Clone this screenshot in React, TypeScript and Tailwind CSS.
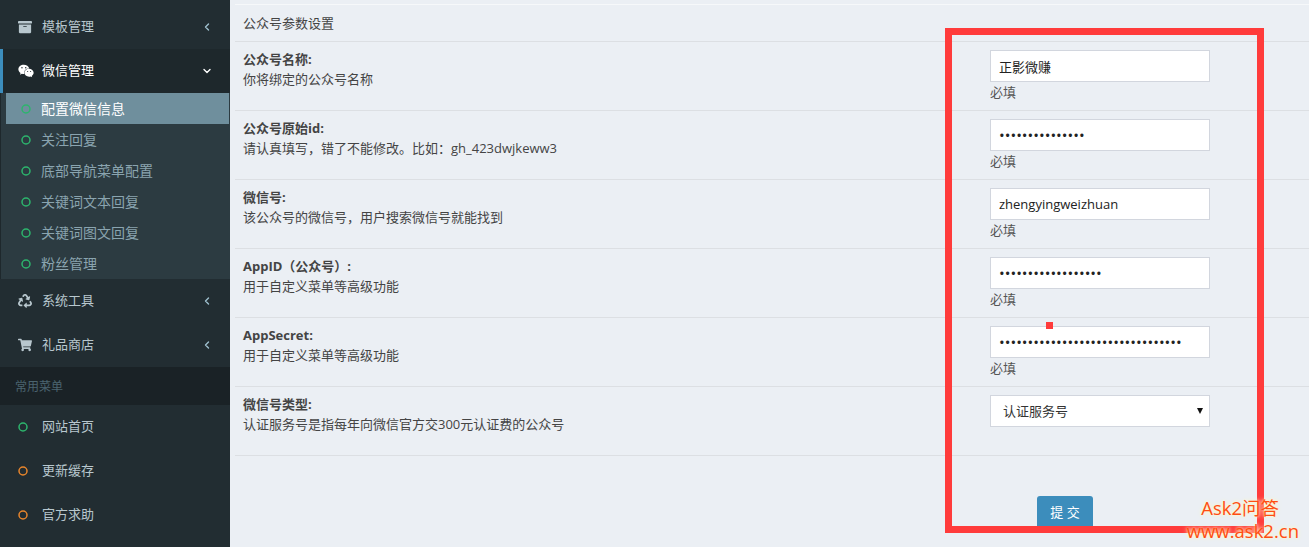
import React from 'react';
import { ChevronDown, ChevronLeft } from 'lucide-react';
import { FaArchive, FaRecycle, FaShoppingCart, FaWeixin } from 'react-icons/fa';

const fontStack = '[font-family:"Open_Sans","Noto_Sans_CJK_SC",sans-serif]';

const subItems = ['配置微信信息', '关注回复', '底部导航菜单配置', '关键词文本回复', '关键词图文回复', '粉丝管理'];

const fields = [
  { title: '公众号名称:', desc: '你将绑定的公众号名称', type: 'text', value: '正影微赚' },
  { title: '公众号原始id:', desc: '请认真填写，错了不能修改。比如：gh_423dwjkeww3', type: 'password', value: '•••••••••••••••' },
  { title: '微信号:', desc: '该公众号的微信号，用户搜索微信号就能找到', type: 'text', value: 'zhengyingweizhuan' },
  { title: 'AppID（公众号）:', desc: '用于自定义菜单等高级功能', type: 'password', value: '••••••••••••••••••' },
  { title: 'AppSecret:', desc: '用于自定义菜单等高级功能', type: 'password', value: '••••••••••••••••••••••••••••••••' },
];

const Ring = ({ color }: { color: string }) => (
  <svg viewBox="0 0 10 10" className="block h-[10px] w-[10px]">
    <circle cx="5" cy="5" r="4" fill="none" stroke={color} strokeWidth="1.5" />
  </svg>
);

const NavRow = ({ icon, label }: { icon: React.ReactNode; label: string }) => (
  <div className="flex h-11 items-center pl-[18px] pr-[17px] text-[13px] text-[#b8c7ce]">
    <span className="flex w-[24px] items-center text-[14px]">{icon}</span>
    <span className="flex-1">{label}</span>
    <ChevronLeft size={12} strokeWidth={2.75} className="text-[#9fc0cf]" />
  </div>
);

const PlainRow = ({ label, ring }: { label: string; ring: string }) => (
  <div className="flex h-11 items-center pl-[18px] text-[13px] text-[#b8c7ce]">
    <span className="w-[24px]">
      <Ring color={ring} />
    </span>
    <span>{label}</span>
  </div>
);

const Sidebar = () => (
  <aside className="flex w-[230px] shrink-0 flex-col bg-[#222d32] pt-[5px]">
    <NavRow icon={<FaArchive />} label="模板管理" />
    <div className="flex h-11 items-center border-l-[3px] border-[#3c8dbc] bg-[#1e282c] pl-[15px] pr-[17px] text-[13px] text-white">
      <span className="flex w-[24px] items-center text-[16px]">
        <FaWeixin />
      </span>
      <span className="flex-1">微信管理</span>
      <ChevronDown size={12} strokeWidth={2.75} />
    </div>
    <ul className="border-l border-[#1e282c] bg-[#2c3b41] pl-[5px] pr-px">
      {subItems.map((item, i) => (
        <li
          key={item}
          className={`flex h-[31px] items-center pl-[15px] text-[14px] ${
            i === 0 ? 'bg-[#6f8f9d] text-white' : 'text-[#8aa4af]'
          }`}
        >
          <span className="w-[20px]">
            <Ring color="#2db56d" />
          </span>
          {item}
        </li>
      ))}
    </ul>
    <NavRow icon={<FaRecycle />} label="系统工具" />
    <NavRow icon={<FaShoppingCart />} label="礼品商店" />
    <div className="flex h-[38px] items-center bg-[#1a2226] pl-[15px] pt-px text-[12px] text-[#4b646f]">常用菜单</div>
    <PlainRow label="网站首页" ring="#2db56d" />
    <PlainRow label="更新缓存" ring="#e8862c" />
    <PlainRow label="官方求助" ring="#e8862c" />
  </aside>
);

const Row = ({ title, desc, children }: { title: string; desc: string; children: React.ReactNode }) => (
  <div className="flex h-[69px] border-b border-[#dcdfe3] pl-2">
    <div className="flex-1 pt-[7px] text-[13px] leading-[20px] text-[#444]">
      <div className="font-bold">{title}</div>
      <div>{desc}</div>
    </div>
    <div className="w-[319px] pt-2">{children}</div>
  </div>
);

export default function App() {
  return (
    <div className={`relative flex h-[547px] w-[1309px] overflow-hidden bg-[#ebeff4] ${fontStack}`}>
      <Sidebar />

      <main className="flex-1 pl-[5px] pt-[4px]">
        <div className="border-t border-[#f6f8fa]">
          <div className="flex h-[37px] items-center border-b border-[#dcdfe3] pl-2 pt-px text-[13px] text-[#444]">公众号参数设置</div>
          {fields.map((f) => (
            <Row key={f.title} title={f.title} desc={f.desc}>
              <input
                type={f.type}
                readOnly
                value={f.value}
                className={`block h-[32px] w-[220px] border border-[#d2d6de] bg-white px-2 text-[#222] ${
                  f.type === 'password' ? 'text-[15.2px]' : 'text-[13px]'
                }`}
              />
              <div className="mt-px text-[13px] leading-[18px] text-[#555]">必填</div>
            </Row>
          ))}
          <Row title="微信号类型:" desc="认证服务号是指每年向微信官方交300元认证费的公众号">
            <div className="relative w-[220px]">
              <select
                defaultValue="认证服务号"
                className="block h-[32px] w-full appearance-none border border-[#d2d6de] bg-white px-3 pt-px text-[13px] text-[#333]"
              >
                <option>认证服务号</option>
                <option>订阅号</option>
              </select>
              <svg viewBox="0 0 6 6" className="absolute right-[7px] top-[13px] h-[6px] w-[6px]">
                <path d="M0 0h6L3 6z" fill="#111" />
              </svg>
            </div>
          </Row>
          <div className="flex justify-end pt-[40px]">
            <div className="w-[319px] pl-[47px]">
              <button className="h-[34px] w-[56px] rounded-[3px] bg-[#3c8dbc] text-[13px] text-white">提 交</button>
            </div>
          </div>
        </div>
      </main>

      {/* red annotation drawn over the form */}
      <div className="pointer-events-none absolute left-[945px] top-[28px] h-[505px] w-[319px] border-[7px] border-[#ff3b3b]" />
      <div className="absolute left-[1046px] top-[322px] h-[7px] w-[7px] bg-[#ff3b3b]" />

      <div className="absolute right-[10px] top-[496px] text-right text-[18.5px] leading-[23px] text-[#ff4d12] [text-shadow:0_0_3px_#fff6c8,0_0_5px_#fff6c8]">
        <div className="pr-[20px]">Ask2问答</div>
        <div>www.ask2.cn</div>
      </div>
    </div>
  );
}
